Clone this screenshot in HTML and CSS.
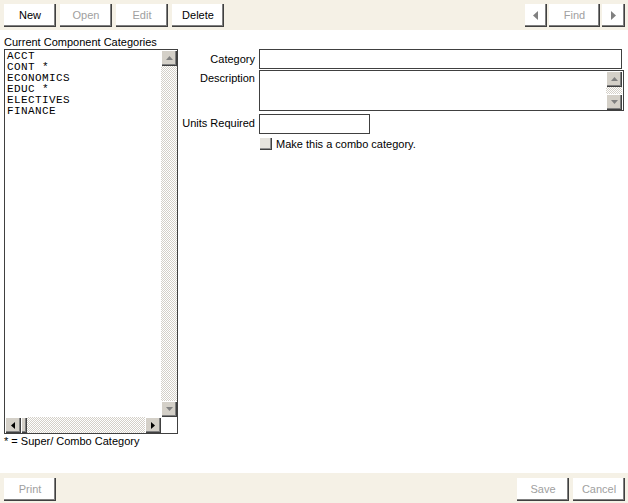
FILE: index.html
```html
<!DOCTYPE html>
<html lang="en">
<head>
  <meta charset="UTF-8">
  <title>Component Categories</title>
  <link rel="stylesheet" href="styles.css">
</head>
<body>
  <div class="window">
    <!-- top toolbar -->
    <div class="bar top">
      <div class="group">
        <button class="btn">New</button>
        <button class="btn off">Open</button>
        <button class="btn off">Edit</button>
        <button class="btn">Delete</button>
      </div>
      <div class="group nav">
        <button class="btn arrow">
          <svg width="6" height="9" viewBox="0 0 6 9"><polygon points="5,0 5,9 0,4.5" fill="#808080"/></svg>
        </button>
        <button class="btn off find">Find</button>
        <button class="btn arrow wide">
          <svg width="6" height="9" viewBox="0 0 6 9"><polygon points="0,0 0,9 5,4.5" fill="#808080"/></svg>
        </button>
      </div>
    </div>

    <div class="main">
      <!-- left: list of categories -->
      <div class="categories">
        <div class="caption">Current Component Categories</div>
        <div class="listbox">
          <div class="list-body">
            <div class="list-items">
              <div>ACCT</div>
              <div>CONT *</div>
              <div>ECONOMICS</div>
              <div>EDUC *</div>
              <div>ELECTIVES</div>
              <div>FINANCE</div>
            </div>
            <div class="vscroll">
              <div class="sbtn">
                <svg width="7" height="4" viewBox="0 0 7 4"><polygon points="0,4 7,4 3.5,0" fill="#808080"/></svg>
              </div>
              <div class="track"></div>
              <div class="sbtn">
                <svg width="7" height="4" viewBox="0 0 7 4"><polygon points="0,0 7,0 3.5,4" fill="#808080"/></svg>
              </div>
            </div>
          </div>
          <div class="hrow">
            <div class="hscroll">
              <div class="sbtn">
                <svg width="4" height="7" viewBox="0 0 4 7"><polygon points="4,0 4,7 0,3.5" fill="#000"/></svg>
              </div>
              <div class="thumb"></div>
              <div class="track"></div>
              <div class="sbtn">
                <svg width="4" height="7" viewBox="0 0 4 7"><polygon points="0,0 0,7 4,3.5" fill="#000"/></svg>
              </div>
            </div>
            <div class="corner"></div>
          </div>
        </div>
        <div class="note">* = Super/ Combo Category</div>
      </div>

      <!-- right: details form -->
      <div class="details">
        <label class="lbl mid">Category</label>
        <div class="field category"></div>

        <label class="lbl top-lbl">Description</label>
        <div class="field description">
          <div class="desc-text"></div>
          <div class="vscroll">
            <div class="sbtn">
              <svg width="7" height="4" viewBox="0 0 7 4"><polygon points="0,4 7,4 3.5,0" fill="#808080"/></svg>
            </div>
            <div class="track"></div>
            <div class="sbtn">
              <svg width="7" height="4" viewBox="0 0 7 4"><polygon points="0,0 7,0 3.5,4" fill="#808080"/></svg>
            </div>
          </div>
        </div>

        <label class="lbl mid">Units Required</label>
        <div class="field units"></div>

        <span></span>
        <label class="check"><span class="box"></span>Make this a combo category.</label>
      </div>
    </div>

    <!-- bottom toolbar -->
    <div class="bar bottom">
      <div class="group">
        <button class="btn off">Print</button>
      </div>
      <div class="group">
        <button class="btn off">Save</button>
        <button class="btn off">Cancel</button>
      </div>
    </div>
  </div>
</body>
</html>
```

FILE: styles.css
```css
* {
  box-sizing: border-box;
}

body {
  margin: 0;
  background: #ffffff;
  font-family: 'Liberation Sans', Arial, sans-serif;
  font-size: 11px;
  color: #000;
}

.window {
  width: 628px;
  height: 503px;
  display: flex;
  flex-direction: column;
}

/* toolbars */
.bar {
  height: 30px;
  background: #f5f1e6;
  display: flex;
  justify-content: space-between;
  padding: 4px 3px 0 4px;
}

.bar.bottom {
  padding-top: 5px;
}

.group {
  display: flex;
  gap: 4px;
}

.group.nav {
  gap: 2px;
}

.btn {
  width: 52px;
  height: 23px;
  padding: 0 0 1px 0;
  border: none;
  background: #ffffff;
  font-family: 'Liberation Sans', Arial, sans-serif;
  font-size: 11px;
  color: #000;
  box-shadow: inset -1px -1px #404040, inset -2px -2px #808080;
  display: flex;
  align-items: center;
  justify-content: center;
}

.btn.off {
  color: #a0a0a0;
}

.btn.find {
  width: 51px;
}

.btn.arrow {
  width: 22px;
}

.btn.arrow.wide {
  width: 23px;
}

/* main area */
.main {
  flex: 1;
  display: flex;
  padding-top: 6px;
}

.categories {
  width: 178px;
  padding-left: 4px;
  display: flex;
  flex-direction: column;
}

.caption,
.note {
  height: 13px;
  line-height: 13px;
}

.note {
  margin-top: 1px;
}

.listbox {
  width: 174px;
  height: 385px;
  border: 1px solid #404040;
  display: flex;
  flex-direction: column;
  background: #fff;
}

.list-body {
  flex: 1;
  display: flex;
}

.list-items {
  flex: 1;
  padding: 1px 0 0 2px;
  font-family: 'Liberation Mono', 'DejaVu Sans Mono', monospace;
  font-size: 11px;
  letter-spacing: 0.4px;
  line-height: 11px;
}

/* scrollbars */
.vscroll {
  width: 16px;
  display: flex;
  flex-direction: column;
}

.hrow {
  height: 16px;
  display: flex;
}

.hscroll {
  flex: 1;
  display: flex;
}

.corner {
  width: 16px;
  background: #fff;
}

.sbtn {
  width: 16px;
  height: 16px;
  background: #d4d0c8;
  box-shadow: inset 1px 1px #ffffff, inset -1px -1px #404040, inset -2px -2px #808080;
  display: flex;
  align-items: center;
  justify-content: center;
}

.thumb {
  width: 6px;
  background: #d4d0c8;
  box-shadow: inset 1px 1px #ffffff, inset -1px -1px #404040, inset -2px -2px #808080;
}

.track {
  flex: 1;
  background-color: #fff;
  background-image: repeating-conic-gradient(#d4d0c8 0 25%, #ffffff 0 50%);
  background-size: 2px 2px;
}

/* details form */
.details {
  display: grid;
  grid-template-columns: 77px auto;
  column-gap: 4px;
  align-content: start;
  padding-top: 13px;
}

.lbl {
  text-align: right;
  white-space: nowrap;
}

.lbl.mid {
  align-self: center;
}

.lbl.top-lbl {
  padding-top: 3px;
}

.field {
  border: 1px solid #404040;
  background: #fff;
}

.category {
  width: 363px;
  height: 20px;
}

.description {
  width: 365px;
  height: 41px;
  margin-top: 1px;
  display: flex;
  padding-right: 1px;
}

.desc-text {
  flex: 1;
}

.units {
  width: 111px;
  height: 20px;
  margin-top: 3px;
}

.check {
  display: flex;
  align-items: center;
  margin-top: 3px;
  height: 13px;
}

.box {
  width: 13px;
  height: 13px;
  margin-right: 4px;
  background: #e6e4de;
  box-shadow: inset 1px 1px #ffffff, inset -1px -1px #404040, inset -2px -2px #909090;
}
```
